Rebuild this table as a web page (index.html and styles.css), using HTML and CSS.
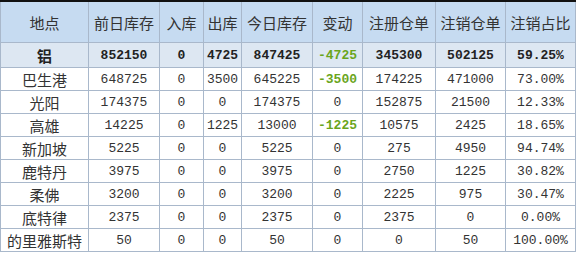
FILE: index.html
```html
<!DOCTYPE html>
<html lang="zh-CN">
<head>
    <meta charset="UTF-8">
    <title>库存</title>
    <link rel="stylesheet" href="styles.css">
</head>
<body>
    <table class="stock">
        <colgroup>
            <col class="c-place">
            <col class="c-prev">
            <col class="c-in">
            <col class="c-out">
            <col class="c-today">
            <col class="c-chg">
            <col class="c-reg">
            <col class="c-can">
            <col class="c-pct">
        </colgroup>
        <thead>
            <tr>
                <th>地点</th>
                <th>前日库存</th>
                <th>入库</th>
                <th>出库</th>
                <th>今日库存</th>
                <th>变动</th>
                <th>注册仓单</th>
                <th>注销仓单</th>
                <th>注销占比</th>
            </tr>
        </thead>
        <tbody>
            <tr class="total">
                <td class="name">铝</td>
                <td>852150</td>
                <td>0</td>
                <td>4725</td>
                <td>847425</td>
                <td class="neg">-4725</td>
                <td>345300</td>
                <td>502125</td>
                <td>59.25%</td>
            </tr>
            <tr>
                <td class="name">巴生港</td>
                <td>648725</td>
                <td>0</td>
                <td>3500</td>
                <td>645225</td>
                <td class="neg">-3500</td>
                <td>174225</td>
                <td>471000</td>
                <td>73.00%</td>
            </tr>
            <tr>
                <td class="name">光阳</td>
                <td>174375</td>
                <td>0</td>
                <td>0</td>
                <td>174375</td>
                <td>0</td>
                <td>152875</td>
                <td>21500</td>
                <td>12.33%</td>
            </tr>
            <tr>
                <td class="name">高雄</td>
                <td>14225</td>
                <td>0</td>
                <td>1225</td>
                <td>13000</td>
                <td class="neg">-1225</td>
                <td>10575</td>
                <td>2425</td>
                <td>18.65%</td>
            </tr>
            <tr>
                <td class="name">新加坡</td>
                <td>5225</td>
                <td>0</td>
                <td>0</td>
                <td>5225</td>
                <td>0</td>
                <td>275</td>
                <td>4950</td>
                <td>94.74%</td>
            </tr>
            <tr>
                <td class="name">鹿特丹</td>
                <td>3975</td>
                <td>0</td>
                <td>0</td>
                <td>3975</td>
                <td>0</td>
                <td>2750</td>
                <td>1225</td>
                <td>30.82%</td>
            </tr>
            <tr>
                <td class="name">柔佛</td>
                <td>3200</td>
                <td>0</td>
                <td>0</td>
                <td>3200</td>
                <td>0</td>
                <td>2225</td>
                <td>975</td>
                <td>30.47%</td>
            </tr>
            <tr>
                <td class="name">底特律</td>
                <td>2375</td>
                <td>0</td>
                <td>0</td>
                <td>2375</td>
                <td>0</td>
                <td>2375</td>
                <td>0</td>
                <td>0.00%</td>
            </tr>
            <tr>
                <td class="name">的里雅斯特</td>
                <td>50</td>
                <td>0</td>
                <td>0</td>
                <td>50</td>
                <td>0</td>
                <td>0</td>
                <td>50</td>
                <td>100.00%</td>
            </tr>
        </tbody>
    </table>
</body>
</html>
```

FILE: styles.css
```css
body {
    margin: 0;
    padding: 0;
    background-color: #fff;
    font-family: "Liberation Mono", "Noto Sans CJK SC", monospace;
    font-size: 13px;
    color: #333;
}

.stock {
    width: 576px;
    table-layout: fixed;
    border-collapse: collapse;
    border-top: 2px solid #111;
}

.c-place { width: 88px; }
.c-prev  { width: 71px; }
.c-in    { width: 44px; }
.c-out   { width: 38px; }
.c-today { width: 71px; }
.c-chg   { width: 50px; }
.c-reg   { width: 73px; }
.c-can   { width: 70px; }
.c-pct   { width: 70px; }

.stock th,
.stock td {
    border: 1px solid #a9b8cb;
    text-align: center;
    padding: 0;
    white-space: nowrap;
    overflow: hidden;
}

.stock th {
    height: 40px;
    background-color: #c6dbf1;
    font-family: "Noto Sans CJK SC", sans-serif;
    font-size: 15px;
    font-weight: normal;
    color: #333;
}

.stock td {
    height: 22px;
}

.stock td.name {
    font-family: "Noto Sans CJK SC", sans-serif;
    font-size: 15px;
}

.total td {
    height: 24px;
    background-color: #dde7f2;
    font-weight: bold;
    color: #222;
}

.neg {
    color: #6aa51c;
    font-weight: bold;
}

.total td.neg {
    color: #6aa51c;
}
```
